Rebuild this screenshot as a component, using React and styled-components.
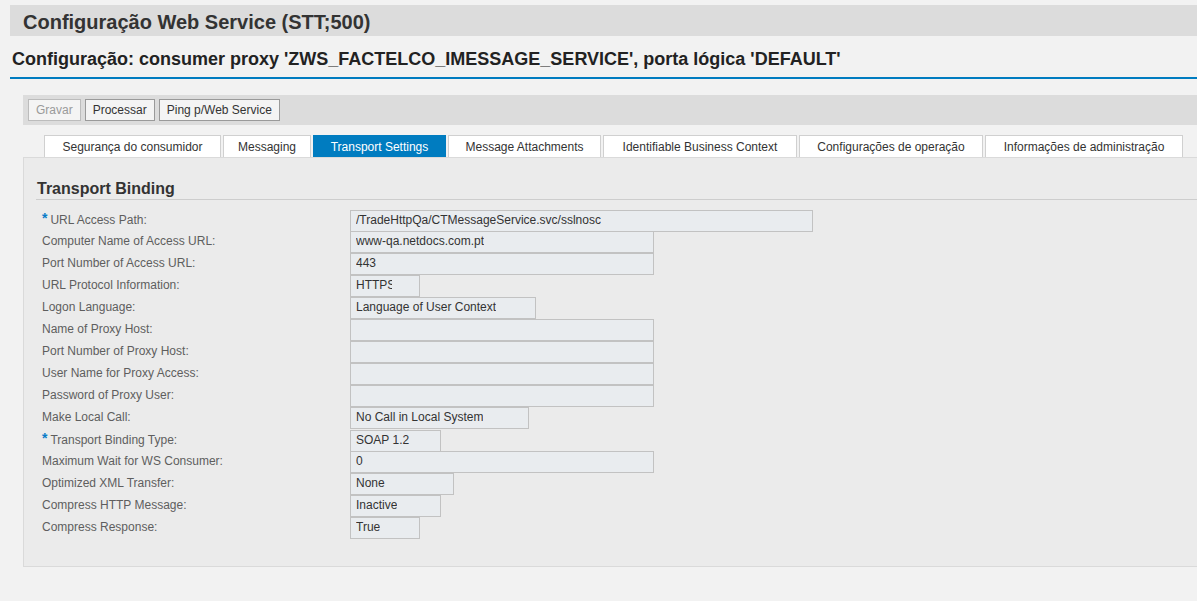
import styled, { createGlobalStyle } from "styled-components";

const GlobalStyle = createGlobalStyle`
  body {
    margin: 0;
    background: #f2f2f2;
    font-family: "Liberation Sans", Arial, sans-serif;
    color: #333;
  }
`;

const tabs = [
  { label: "Segurança do consumidor", width: 177 },
  { label: "Messaging", width: 88 },
  { label: "Transport Settings", width: 133, active: true },
  { label: "Message Attachments", width: 153 },
  { label: "Identifiable Business Context", width: 194 },
  { label: "Configurações de operação", width: 184 },
  { label: "Informações de administração", width: 198 },
];

const fields = [
  { label: "URL Access Path:", value: "/TradeHttpQa/CTMessageService.svc/sslnosc", width: 463, required: true },
  { label: "Computer Name of Access URL:", value: "www-qa.netdocs.com.pt", width: 304 },
  { label: "Port Number of Access URL:", value: "443", width: 304 },
  { label: "URL Protocol Information:", value: "HTTPS", width: 70, clip: 36 },
  { label: "Logon Language:", value: "Language of User Context", width: 186 },
  { label: "Name of Proxy Host:", value: "", width: 304 },
  { label: "Port Number of Proxy Host:", value: "", width: 304 },
  { label: "User Name for Proxy Access:", value: "", width: 304 },
  { label: "Password of Proxy User:", value: "", width: 304 },
  { label: "Make Local Call:", value: "No Call in Local System", width: 179 },
  { label: "Transport Binding Type:", value: "SOAP 1.2", width: 91, required: true },
  { label: "Maximum Wait for WS Consumer:", value: "0", width: 304 },
  { label: "Optimized XML Transfer:", value: "None", width: 104 },
  { label: "Compress HTTP Message:", value: "Inactive", width: 91 },
  { label: "Compress Response:", value: "True", width: 70 },
];

const App = () => {
  return (
    <Page>
      <GlobalStyle />
      <TitleBar>Configuração Web Service (STT;500)</TitleBar>
      <SubTitle>
        Configuração: consumer proxy 'ZWS_FACTELCO_IMESSAGE_SERVICE', porta
        lógica 'DEFAULT'
      </SubTitle>

      <Toolbar>
        <ToolButton disabled>Gravar</ToolButton>
        <ToolButton>Processar</ToolButton>
        <ToolButton>Ping p/Web Service</ToolButton>
      </Toolbar>

      <TabStrip>
        {tabs.map((t) => (
          <Tab key={t.label} $width={t.width} $active={t.active}>
            {t.label}
          </Tab>
        ))}
      </TabStrip>

      <Panel>
        <SectionTitle>Transport Binding</SectionTitle>
        <Form>
          {fields.map((f) => (
            <Row key={f.label}>
              <Label>
                {f.required && <Star>*</Star>}
                {f.label}
              </Label>
              <Field $width={f.width}>
                <Value $clip={f.clip}>{f.value}</Value>
              </Field>
            </Row>
          ))}
        </Form>
      </Panel>
    </Page>
  );
};

const Page = styled.div`
  padding-top: 5px;
  min-height: 596px;
`;

const TitleBar = styled.div`
  margin-left: 10px;
  height: 31px;
  box-sizing: border-box;
  background: #dcdcdc;
  padding: 3px 0 0 13px;
  display: flex;
  align-items: center;
  font-size: 20px;
  font-weight: bold;
  color: #333;
`;

const SubTitle = styled.div`
  margin-left: 10px;
  padding: 5px 2px 0;
  height: 36px;
  display: flex;
  align-items: center;
  font-size: 18px;
  font-weight: bold;
  color: #222;
  border-bottom: 2px solid #007cc0;
  white-space: nowrap;
`;

const Toolbar = styled.div`
  margin: 16px 0 0 23px;
  height: 30px;
  box-sizing: border-box;
  padding: 4px 5px;
  background: #dcdcdc;
  display: flex;
  gap: 4px;
`;

const ToolButton = styled.button`
  height: 22px;
  padding: 0 7px;
  border: 1px solid ${(p) => (p.disabled ? "#bcbcbc" : "#9a9a9a")};
  background: #f4f4f4;
  color: ${(p) => (p.disabled ? "#9a9a9a" : "#333")};
  font-family: "Liberation Sans", Arial, sans-serif;
  font-size: 12px;
  border-radius: 0;
  cursor: default;
`;

const TabStrip = styled.div`
  margin: 10px 0 0 44px;
  display: flex;
  gap: 2px;
`;

const Tab = styled.div`
  width: ${(p) => p.$width}px;
  height: 22px;
  box-sizing: border-box;
  display: flex;
  align-items: center;
  justify-content: center;
  font-size: 12px;
  white-space: nowrap;
  background: ${(p) => (p.$active ? "#007cc0" : "#fff")};
  color: ${(p) => (p.$active ? "#fff" : "#333")};
  border: 1px solid ${(p) => (p.$active ? "#007cc0" : "#d0d0d0")};
  border-bottom: none;
`;

const Panel = styled.div`
  margin-left: 23px;
  height: 410px;
  box-sizing: border-box;
  background: #ebebeb;
  border: 1px solid #dadada;
  border-right: none;
  padding: 21px 0 0 12px;
`;

const SectionTitle = styled.h2`
  margin: 0;
  padding-left: 1px;
  height: 21px;
  box-sizing: border-box;
  font-size: 16px;
  line-height: 19px;
  font-weight: bold;
  color: #333;
  border-bottom: 1px solid #cdcdcd;
`;

const Form = styled.div`
  margin-top: 9px;
  padding-left: 6px;
  display: flex;
  flex-direction: column;
`;

const Row = styled.div`
  display: grid;
  grid-template-columns: 308px auto;
  height: 22px;
  align-items: center;
`;

const Label = styled.div`
  font-size: 12px;
  line-height: 20px;
  padding-bottom: 2px;
  color: #5e5e5e;
  white-space: nowrap;
`;

const Star = styled.span`
  color: #0a7cc8;
  font-weight: bold;
  font-size: 14px;
  margin-right: 3px;
  position: relative;
  top: -1px;
`;

const Field = styled.div`
  width: ${(p) => p.$width}px;
  height: 22px;
  box-sizing: border-box;
  border: 1px solid #c2c2c2;
  background: #e9ecef;
  padding: 0 5px;
  font-size: 12px;
  line-height: 19px;
  color: #333;
  overflow: hidden;
  white-space: nowrap;
`;

const Value = styled.span`
  display: inline-block;
  max-width: ${(p) => (p.$clip ? `${p.$clip}px` : "none")};
  overflow: hidden;
  vertical-align: top;
`;

export default App;
